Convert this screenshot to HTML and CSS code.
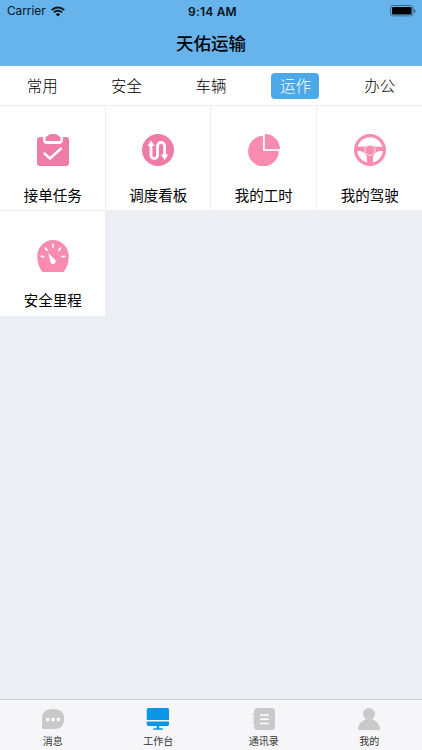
FILE: index.html
```html
<!DOCTYPE html>
<html lang="zh-CN">
<head>
<meta charset="utf-8">
<title>天佑运输</title>
<link rel="stylesheet" href="styles.css">
</head>
<body>
<div class="app">
  <header class="header">
    <div class="status">
      <div class="carrier"><span>Carrier</span>
        <svg width="14" height="11" viewBox="0 0 14 11"><g fill="none" stroke="#07121b" stroke-width="2"><path d="M.8 4.1a8.8 8.8 0 0 1 12.4 0"/><path d="M3 6.4a5.7 5.7 0 0 1 8 0"/></g><path d="M4.8 8.3a3.2 3.2 0 0 1 4.4 0L7 10.6z"/></svg>
      </div>
      <div class="time">9:14 AM</div>
      <svg class="battery" width="26" height="12" viewBox="0 0 26 12"><rect x=".5" y=".5" width="22.6" height="10.4" rx="2.5" fill="none" stroke="#3b6b8c"/><rect x="2" y="2" width="19.6" height="7.4" rx="1.2"/><path d="M24.2 4v4q1.500-.5 1.500-2t-1.500-2" fill="#3b6b8c"/></svg>
    </div>
    <h1 class="title">天佑运输</h1>
  </header>
  <nav class="tabs">
    <div class="tab"><span>常用</span></div>
    <div class="tab"><span>安全</span></div>
    <div class="tab"><span>车辆</span></div>
    <div class="tab active"><span>运作</span></div>
    <div class="tab"><span>办公</span></div>
  </nav>
  <main class="grid">
    <div class="cell">
      <svg class="icon" viewBox="0 0 32 32"><path fill="#ef7ba7" d="M3 3h3v2.500q0 4.500 4.500 4.500h11q4.500 0 4.500-4.500V3h3q3 0 3 3v23q0 3-3 3H3q-3 0-3-3V6q0-3 3-3z"/><path fill="#ef7ba7" d="M8.500 6V4q0-1.500 2-2Q12 0 14 0h4q2 0 3.500 2 2 .5 2 2v2q0 1-1 1h-13q-1 0-1-1z"/><path d="M7.500 19.500l5.500 5L24 14.500" fill="none" stroke="#fff" stroke-width="2.400" stroke-linecap="round" stroke-linejoin="round"/></svg>
      <span>接单任务</span>
    </div>
    <div class="cell">
      <svg class="icon" viewBox="0 0 32 32"><circle cx="16" cy="16" r="16" fill="#ef7ba7"/><path d="M9 10v11.200a3.300 3.300 0 0 0 6.600 0V12a3.500 3.500 0 0 1 7 0v9" fill="none" stroke="#fff" stroke-width="2.800"/><path d="M5.300 12L9 6.500l3.700 5.500zM18.900 20.500h7.400l-3.700 5.500z" fill="#fff"/></svg>
      <span>调度看板</span>
    </div>
    <div class="cell">
      <svg class="icon" viewBox="0 0 32 32"><path fill="#f98ab0" d="M15 1.800V17h15.700A15.300 15.300 0 1 1 15 1.800z"/><path fill="#f98ab0" d="M16.800 0A15.200 15.200 0 0 1 32 15.200H16.800z"/></svg>
      <span>我的工时</span>
    </div>
    <div class="cell">
      <svg class="icon" viewBox="0 0 32 32"><circle cx="16" cy="16" r="14.400" fill="none" stroke="#f98ab0" stroke-width="3.200"/><path fill="#f98ab0" d="M2.500 12.800h8q2-1.300 5.500-1.300t5.500 1.300h8V17h-3q-6 .5-7.500 6.200V30h-6v-6.800Q11.500 17.500 5.500 17h-3z"/><circle cx="16" cy="16.300" r="5.100" fill="#f98ab0" stroke="#fff" stroke-width=".8"/></svg>
      <span>我的驾驶</span>
    </div>
    <div class="cell">
      <svg class="icon" viewBox="0 0 32 32"><path fill="#f98ab0" d="M5.500 32Q.3 25.500.3 16.500a15.700 16.500 0 0 1 31.400 0Q31.700 25.500 26.500 32z"/><path d="M16 4.500v2.500M8.600 8.300l1.300 2M23.400 8.300l-1.300 2M4.300 16.300l2.300.3M27.700 16.300l-2.300.3" stroke="#fff" stroke-width="1.800" stroke-linecap="round"/><path d="M11.300 13l6.200 6.200a2.700 2.700 0 1 1-4.200 2.500z" fill="#fff"/></svg>
      <span>安全里程</span>
    </div>
  </main>
  <footer class="bar">
    <div class="item">
      <svg width="24" height="24" viewBox="0 0 24 24"><path fill="#c9c9c9" d="M1 22V12Q1 2 11 2h2q10.200 0 10.200 10T13 22z"/><g fill="#fff"><circle cx="6.600" cy="12.600" r="1.800"/><circle cx="12" cy="12.600" r="1.800"/><circle cx="17.400" cy="12.600" r="1.800"/></g></svg>
      <span>消息</span>
    </div>
    <div class="item">
      <svg width="24" height="24" viewBox="0 0 24 24"><g fill="#0797e4"><path d="M2.500 1h19q1.500 0 1.500 1.500V13H.7V2.500Q.7 1 2.500 1zM.7 14.500H23V17q0 2-1.500 2h-19Q.7 19 .7 17z"/><path d="M10.800 19h2.400v2.300h3.600v1.500H7.200v-1.500h3.600z"/></g></svg>
      <span>工作台</span>
    </div>
    <div class="item">
      <svg width="24" height="24" viewBox="0 0 24 24"><rect x="2" y="1" width="21" height="22" rx="3.500" fill="#c9c9c9"/><path d="M.7 7.500h3M.7 11.500h3M.7 15.500h3" stroke="#c9c9c9" stroke-width="1.500"/><path d="M8.200 7.900h8.600M8.200 12.200h8.600M8.200 16.500h8.600" stroke="#fff" stroke-width="1.500"/></svg>
      <span>通讯录</span>
    </div>
    <div class="item">
      <svg width="24" height="24" viewBox="0 0 24 24"><g fill="#c9c9c9"><circle cx="12" cy="7" r="6"/><path d="M.9 23q0-8 7.600-10.600h7Q23.200 15 23.200 23z"/></g></svg>
      <span>我的</span>
    </div>
  </footer>
</div>
</body>
</html>
```
FILE: styles.css
```css
* { box-sizing: border-box; }
body { margin: 0; font-family: "Noto Sans CJK SC", sans-serif; }
svg { display: block; flex: none; }
.app { width: 422px; height: 750px; display: flex; flex-direction: column; background: #ededf4; overflow: hidden; }
.header { height: 66px; flex: none; background: #66b4eb; border-bottom: 1px solid #7bb6df; }
.status { height: 22px; padding: 0 6px 0 7px; display: grid; grid-template-columns: 1fr auto 1fr; align-items: center; font-family: Inter, sans-serif; font-size: 12px; color: #07121b; }
.carrier { display: flex; align-items: center; gap: 5px; font-size: 11.800px; }
.time { font-weight: 600; letter-spacing: .2px; padding-left: 2px; }
.battery { justify-self: end; }
.title { margin: 0; height: 41px; line-height: 41px; text-align: center; font-size: 17.500px; font-weight: 500; color: #000; }
.tabs { height: 40px; flex: none; display: flex; background: #fff; border-bottom: 1px solid #ededf0; }
.tab { flex: 1; display: flex; justify-content: center; align-items: center; font-size: 15.500px; font-weight: 300; color: #000; }
.tab span { width: 48px; height: 26px; line-height: 24px; border-radius: 4px; text-align: center; }
.active span { background: #4da8e7; color: #fff; }
.grid { flex: 1; display: grid; grid-template-columns: repeat(4, 1fr); grid-auto-rows: 105px; align-content: start; }
.cell { background: #fff; border-right: 1px solid #ededf2; display: flex; flex-direction: column; align-items: center; padding: 28px 0 0 1px; font-size: 14.500px; color: #000; }
.cell:nth-child(4) { border-right: 0; }
.cell:nth-child(-n+4) { border-bottom: 1px solid #ededf2; }
.cell:nth-child(n+5) { padding-top: 29px; }
.cell span { line-height: 22px; margin-top: 18px; }
.cell:nth-child(n+5) span { margin-top: 17px; }
.icon { width: 32px; height: 32px; }
.bar { height: 51px; flex: none; display: flex; background: #f6f6f8; border-top: 1px solid #cfcfd6; }
.item { flex: 1; display: flex; flex-direction: column; align-items: center; padding-top: 7px; font-size: 10px; color: #333; }
.item span { line-height: 14px; margin-top: 3px; }
```
